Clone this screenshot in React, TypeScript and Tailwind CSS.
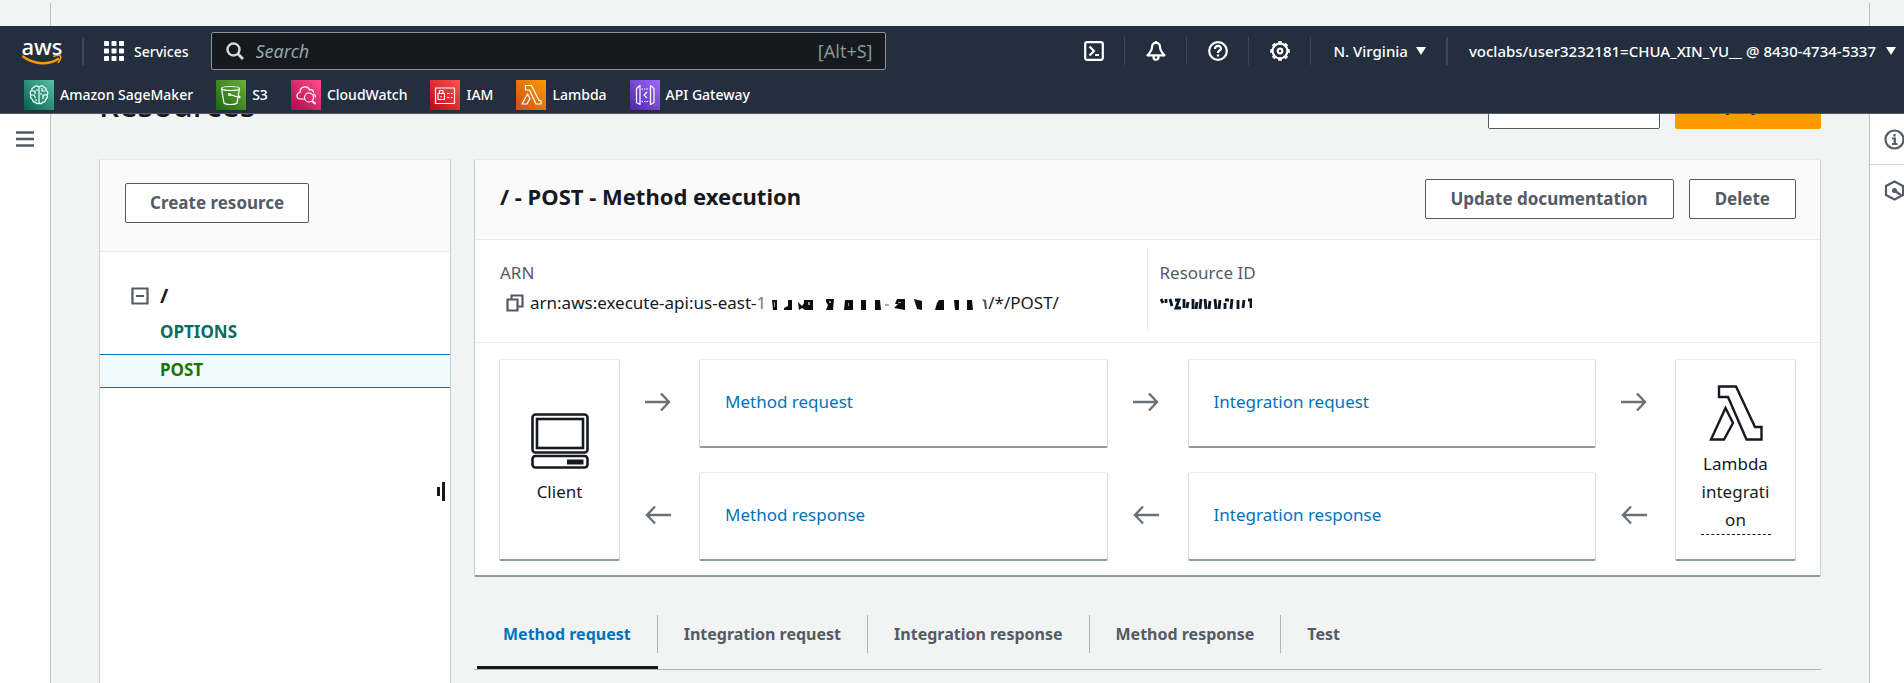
import React from "react";

const PANEL = "bg-white border border-[#c5cfd0] border-t-[#e6eaea]";
const CARD = "bg-white border border-[#d5dbdb] border-t-[#eaeded] border-b-2 border-b-[#8d9a9f] rounded-[2px]";
const BUTTON = "h-10 rounded-[2px] border border-[#545b64] bg-white text-[17px] leading-5 font-bold text-[#545b64]";

function Caret() {
  return (
    <svg className="h-2 w-[10px]" viewBox="0 0 10 8" aria-hidden="true">
      <path d="M0 0h10L5 8z" fill="currentColor" />
    </svg>
  );
}

function AwsLogo() {
  return (
    <div className="flex w-10 flex-col items-center text-white">
      <span className="text-[22px] leading-4 font-medium">aws</span>
      <svg className="mt-[1px] h-[10px] w-10" viewBox="0 0 40 10" aria-hidden="true">
        <path d="M1 1.500C12 10 27 10 36 4" fill="none" stroke="#ff9900" strokeWidth="2.400" strokeLinecap="round" />
        <path d="M32 1.200c3-1 6-.9 6.600 0s-.5 4-2.200 6" fill="none" stroke="#ff9900" strokeWidth="1.600" strokeLinecap="round" />
      </svg>
    </div>
  );
}

function GridIcon() {
  return (
    <svg className="size-5" viewBox="0 0 20 20" fill="currentColor" aria-hidden="true">
      {[0, 7.5, 15].map((y) => [0, 7.5, 15].map((x) => <rect key={`${x}-${y}`} x={x} y={y} width="5" height="5" rx=".8" />))}
    </svg>
  );
}

type Service = { name: string; from: string; to: string; icon: React.ReactNode };

const services: Service[] = [
  {
    name: "Amazon SageMaker", from: "#055f4e", to: "#56c0a7",
    icon: (
      <>
        <path d="M14 6.500c-2-1.500-4 0-4 1-2 0-2.500 2-2 3-2 1-2.500 3-1 4.500-1 2 0 4 1.500 4.500 0 2 1.500 3 3 2.500.5 2 2.500 2 3.500 1V6.500zM16 6.500c2-1.500 4 0 4 1 2 0 2.500 2 2 3 2 1 2.500 3 1 4.500 1 2 0 4-1.500 4.500 0 2-1.500 3-3 2.500-.5 2-2.500 2-3.500 1V6.500z" />
        <path d="M8 11h3v3M7 15h3l1.500 3M14 10h-2M18 8v3h3M23 15h-4v4M16 14h2M12 21v-2" />
      </>
    ),
  },
  {
    name: "S3", from: "#1b660f", to: "#6cae3e",
    icon: (
      <>
        <ellipse cx="14.500" cy="8.500" rx="9" ry="2" />
        <path d="M5.500 8.500L8 23c2 2 11 2 13 0l2.500-14.500M14 14.500l9 3c2 .5 1-1-1-2.500" />
        <circle cx="13.500" cy="14.500" r="1" />
      </>
    ),
  },
  {
    name: "CloudWatch", from: "#b0084d", to: "#ff4f8b",
    icon: (
      <>
        <path d="M13 19H9c-4 0-4-6 0-6.500C9 6 17 5 18.500 10c3-1 4 1 4 2.500M22 14c2 0 3 2 2 3.500" />
        <circle cx="18" cy="17.500" r="4.500" />
        <path d="M21 21l3.500 3" strokeWidth="2" />
      </>
    ),
  },
  {
    name: "IAM", from: "#bd0816", to: "#ff5252",
    icon: <path d="M5.500 8h19v15.500h-19zM8 13.500h6.500v6H8zM9.500 13.500v-3h3.500v3M17 13.500h2.500M21 13.500h1.500M17 17.500h2.500M21 17.500h1.500M11 16v1.500" />,
  },
  {
    name: "Lambda", from: "#c8511b", to: "#ff9900",
    icon: <path d="M9.500 5.500h6L23 20.500h2V24h-5l-6.500-14h-4zM11.500 14l2.500 4.500L11 24H6z" />,
  },
  {
    name: "API Gateway", from: "#4d27a8", to: "#a166ff",
    icon: (
      <>
        <path d="M10 5.500v19L6.500 22.500v-14zM20.500 5.500v19l3.500-2v-14zM17 12l-3 3 3 3" />
        <path d="M11.500 9h8M11.500 21.500h8" strokeDasharray="1.500 1" />
      </>
    ),
  },
];

function ServiceIcon({ service, index }: { service: Service; index: number }) {
  return (
    <svg className="size-[30px]" viewBox="0 0 30 30" aria-hidden="true">
      <defs>
        <linearGradient id={`svc-${index}`} x1="0" y1="1" x2="1" y2="0">
          <stop offset="0" stopColor={service.from} />
          <stop offset="1" stopColor={service.to} />
        </linearGradient>
      </defs>
      <rect width="30" height="30" fill={`url(#svc-${index})`} />
      <g fill="none" stroke="#fff" strokeWidth="1.200" strokeLinejoin="round">{service.icon}</g>
    </svg>
  );
}

function UtilityIcon({ label, children }: { label: string; children: React.ReactNode }) {
  return (
    <div className="flex h-7 w-[62px] items-center justify-center border-r border-[#414750]">
      <button type="button" aria-label={label} className="text-white">
        <svg className="size-5" viewBox="0 0 20 20" fill="none" stroke="currentColor" strokeWidth="2.200" strokeLinejoin="round" aria-hidden="true">
          {children}
        </svg>
      </button>
    </div>
  );
}

function Header() {
  return (
    <header className="flex h-[88px] shrink-0 flex-col border-b border-[#545b64] bg-[#232f3e] text-white">
      <div className="flex h-[50px] items-center">
        <a href="#home" aria-label="AWS home" className="ml-[22px]"><AwsLogo /></a>
        <span className="ml-5 h-7 w-[2px] bg-[#414750]" />
        <button type="button" className="ml-5 flex items-center gap-[10px] text-[14px] font-medium">
          <GridIcon />
          Services
        </button>
        <label className="ml-[22px] flex h-[38px] w-[675px] items-center rounded-[2px] border border-[#879596] bg-[#16191f] pr-3 pl-[14px]">
          <svg className="size-[18px] text-[#d5dbdb]" viewBox="0 0 18 18" fill="none" stroke="currentColor" aria-hidden="true">
            <circle cx="7.500" cy="7.500" r="6" strokeWidth="2.400" />
            <path d="M12 12l5 5" strokeWidth="2.800" />
          </svg>
          <input type="search" aria-label="Search" placeholder="Search" className="ml-3 min-w-0 flex-1 bg-transparent text-[18px] outline-none placeholder:text-[#95a5a6] placeholder:italic" />
          <span className="text-[18px] text-[#879596]">[Alt+S]</span>
        </label>
        <div className="ml-auto flex items-center">
          <UtilityIcon label="CloudShell">
            <rect x="1.200" y="1.200" width="17.600" height="17.600" rx="2" />
            <path d="M5.500 5.500L10 10l-4.500 4.500M11 14h4" />
          </UtilityIcon>
          <UtilityIcon label="Notifications">
            <path d="M10 1.800c-3 0-4 2-4 4.500 0 3-1 4.500-4.500 8h17C15 10.800 14 9.300 14 6.300c0-2.500-1-4.500-4-4.500z" />
            <path d="M7.600 15v1.500c0 3 4.800 3 4.800 0V15M10 0v2" />
          </UtilityIcon>
          <UtilityIcon label="Help">
            <circle cx="10" cy="10" r="8.800" />
            <path d="M7 8c0-4 6-4 6-.5 0 2-3 2-3 4.500M10 13.500v2" />
          </UtilityIcon>
          <UtilityIcon label="Settings">
            <circle cx="10" cy="10" r="7.400" />
            <circle cx="10" cy="10" r="2.300" />
            {[0, 45, 90, 135, 180, 225, 270, 315].map((a) => (
              <path key={a} d="M8.200 1.400h3.600" transform={`rotate(${a} 10 10)`} strokeWidth="2.400" />
            ))}
          </UtilityIcon>
          <button type="button" className="flex items-center gap-2 pl-[22px] text-[15px] font-medium">N. Virginia <Caret /></button>
          <span className="ml-5 h-7 w-[2px] bg-[#414750]" />
          <button type="button" className="flex items-center gap-[10px] pr-2 pl-[21px] text-[15px] font-medium whitespace-nowrap">
            voclabs/user3232181=CHUA_XIN_YU__ @ 8430-4734-5337 <Caret />
          </button>
        </div>
      </div>
      <nav aria-label="Favorites" className="flex items-center gap-[23px] pt-1 pl-6">
        {services.map((s, i) => (
          <a key={s.name} href="#service" className="flex items-center gap-[6px] text-[14px] leading-[30px] font-medium">
            <ServiceIcon service={s} index={i} />
            {s.name}
          </a>
        ))}
      </nav>
    </header>
  );
}

function ArrowPair() {
  return (
    <div className="grid grid-rows-2 gap-6 text-[#687078]">
      {["M0 10h24M16 1.500l8 8.500-8 8.500", "M26 10H2M10 1.500L2 10l8 8.500"].map((d) => (
        <div key={d} className="flex items-center justify-center pr-1 pb-[3px]">
          <svg className="h-5 w-[26px]" viewBox="0 0 26 20" fill="none" stroke="currentColor" strokeWidth="2.400" aria-hidden="true">
            <path d={d} />
          </svg>
        </div>
      ))}
    </div>
  );
}

function StepPair({ steps }: { steps: string[] }) {
  return (
    <div className="grid grid-rows-2 gap-6">
      {steps.map((step) => (
        <div key={step} className={`${CARD} px-[25px] pt-7`}>
          <a href="#step" className="text-[17px] leading-7 text-[#0073bb]">{step}</a>
        </div>
      ))}
    </div>
  );
}

function ArnRedaction() {
  return (
    <svg className="h-5 w-[222px]" viewBox="0 0 222 20" aria-hidden="true">
      <defs><filter id="smudge" x="-5%" y="-20%" width="110%" height="140%"><feGaussianBlur stdDeviation=".7" /></filter></defs>
      <g filter="url(#smudge)" fill="#0b1113">
        <path d="M6 7h5v10H7zM22 7h4v10h-8v-2l4-2zM32 9l4 4 2-3v-3h9v10h-8l-3-2-3 2zM60 6h8l-1 11h-7l2-5-2-3zM79 7h8v10h-9zM95 7h5v10h-5zM109 7h5l1 10h-6zM129 11l2-5h8v11l-11-2 4-4zM148 6l8 2v9l-5-1zM173 7h5v10h-9l2-7zM188 7h5v10h-4zM201 7h5l1 10h-6z" />
        <path d="M119 11h4v2h-4z" opacity=".35" />
        <path d="M216 6l4 1 1 9h-2l-1-7z" opacity=".7" />
      </g>
      <g fill="#fff" opacity=".6"><path d="M8 9h1v5H8zM42 9h2v3h-2zM63 8h2v2h-2zM82 10h1v3h-1zM132 9h3v1h-3z" /></g>
    </svg>
  );
}

function IdRedaction() {
  return (
    <svg className="h-4 w-[92px]" viewBox="0 0 92 16" aria-hidden="true">
      <g filter="url(#smudge)" fill="none" stroke="#0b1420" strokeWidth="2.800">
        <path d="M1 4l2 4M6 4v4M10 4l2 7M15 5h4l-3 8h5M24 4v9M28 7l-1 6M33 4v10M37 7l-1 7M41 4l-1 10M45 4l1 10M50 6l-1 8M55 4l1 10M60 5l-1 9M65 5h4M65 8v6M72 4l-1 10M78 5v9M84 5l-1 8M88 5h3v8" />
      </g>
    </svg>
  );
}

function ExecutionPanel() {
  return (
    <section className={`${PANEL} rounded-[2px] border-b-2 border-b-[#8d9a9f]`}>
      <div className="flex h-20 items-center border-b border-[#eaeded] bg-[#fafafa] pr-6 pb-[2px] pl-[25px]">
        <h2 className="pb-[6px] text-[22px] leading-7 font-bold text-[#16191f]">/ - POST - Method execution</h2>
        <div className="ml-auto flex gap-[15px]">
          <button type="button" className={`${BUTTON} px-[25px]`}>Update documentation</button>
          <button type="button" className={`${BUTTON} px-[25px]`}>Delete</button>
        </div>
      </div>
      <dl className="grid grid-cols-2 border-b border-[#eaeded] pt-2 pb-3 text-[17px] leading-[30px]">
        <div className="h-[82px] border-r border-[#eaeded] pt-[10px] pl-[25px]">
          <dt className="text-[#545b64]">ARN</dt>
          <dd className="flex items-center pl-[6px] whitespace-nowrap text-[#16191f]">
            <svg className="mr-[6px] size-[18px] text-[#545b64]" viewBox="0 0 18 18" fill="none" stroke="currentColor" strokeWidth="2.200" aria-hidden="true">
              <path d="M1.500 5.500h10v11h-10zM5.500 5V1.500h11v11h-4" />
            </svg>
            arn:aws:execute-api:us-east-<span className="text-[#777]">1</span>
            <ArnRedaction />
            /*/POST/
          </dd>
        </div>
        <div className="px-3 pt-[10px]">
          <dt className="text-[#545b64]">Resource ID</dt>
          <dd className="flex h-[30px] items-center"><IdRedaction /></dd>
        </div>
      </dl>
      <div className="grid grid-cols-[121px_79px_1fr_80px_1fr_79px_121px] px-6 pt-4 pb-[14px] text-[17px] leading-7 text-[#16191f]">
        <div className={`${CARD} flex h-[202px] flex-col items-center pt-[53px]`}>
          <svg className="h-14 w-[58px]" viewBox="0 0 58 56" fill="none" stroke="#16191f" aria-hidden="true">
            <rect x="1.500" y="1.500" width="55" height="38" rx="3" strokeWidth="2.600" />
            <rect x="6" y="6" width="46" height="29" strokeWidth="2.600" />
            <rect x="1.500" y="43" width="55" height="11.500" rx="3" strokeWidth="2.600" />
            <path d="M36 49h16.500" strokeWidth="5" />
          </svg>
          <span className="mt-[9px]">Client</span>
        </div>
        <ArrowPair />
        <StepPair steps={["Method request", "Method response"]} />
        <ArrowPair />
        <StepPair steps={["Integration request", "Integration response"]} />
        <ArrowPair />
        <div className={`${CARD} flex flex-col items-center px-6 pt-[25px]`}>
          <svg className="h-14 w-[54px]" viewBox="0 0 54 56" fill="none" stroke="#16191f" strokeWidth="2.400" aria-hidden="true">
            <path d="M10 1.500h17L46 42h6.500v12.500H37.500L19 12h-9zM16.500 23L24 38 15 54.500H2z" />
          </svg>
          <span className="mt-[9px] w-[70px] border-b border-dashed border-[#16191f] text-center wrap-break-word">Lambda integration</span>
        </div>
      </div>
    </section>
  );
}

const tabs = ["Method request", "Integration request", "Integration response", "Method response", "Test"];

function Tabs() {
  return (
    <div role="tablist" className="mt-[38px] flex border-b border-[#aab7b8] pl-[3px] text-[16px] font-bold text-[#545b64]">
      {tabs.map((tab, i) => (
        <button
          key={tab}
          type="button"
          role="tab"
          aria-selected={i === 0}
          className={i === 0 ? "border-b-[3px] border-[#16191f] pb-[13px] text-[#0073bb]" : "border-b-[3px] border-transparent pb-[13px]"}
        >
          <span className={i === tabs.length - 1 ? "block px-[26px] py-1 leading-[30px]" : "block border-r border-[#aab7b8] px-[26px] py-1 leading-[30px]"}>{tab}</span>
        </button>
      ))}
    </div>
  );
}

function ResourceTree() {
  return (
    <aside className={`${PANEL} relative border-b-0`}>
      <div className="h-[92px] border-b border-[#eaeded] bg-[#fafafa] px-[25px] pt-[23px]">
        <button type="button" className={`${BUTTON} px-6`}>Create resource</button>
      </div>
      <ul className="pt-[27px] text-[17px] font-bold">
        <li>
          <div className="flex h-[34px] items-center gap-[11px] pl-[31px] text-[20px] text-[#16191f]">
            <button type="button" aria-label="Collapse">
              <svg className="size-[18px] text-[#545b64]" viewBox="0 0 18 18" fill="none" stroke="currentColor" strokeWidth="2.200" aria-hidden="true">
                <path d="M1.500 1.500h15v15h-15zM5 9h8" />
              </svg>
            </button>
            /
          </div>
          <ul>
            <li className="flex h-[41px] items-center pb-[3px] pl-[60px]"><a href="#options" className="text-[#0f6b5c]">OPTIONS</a></li>
            <li className="flex h-[34px] items-center border-y border-[#0073bb] bg-[#f1faff] pb-[3px] pl-[60px]"><a href="#post" className="text-[#1d7300]">POST</a></li>
          </ul>
        </li>
      </ul>
      <button type="button" aria-label="Resize panel" className="absolute top-[322px] right-[5px] flex items-center gap-[2px]">
        <span className="h-[9px] w-[3px] bg-[#16191f]" />
        <span className="h-[19px] w-[3px] bg-[#16191f]" />
      </button>
    </aside>
  );
}

function MainContent() {
  return (
    <main className="-mt-[25px] flex min-w-0 flex-1 flex-col px-12">
      <div className="flex shrink-0 items-start">
        <h1 className="text-[32px] leading-8 font-medium text-[#16191f]">Resources</h1>
        <div className="ml-auto flex gap-[15px]">
          <button type="button" className={`${BUTTON} flex w-[172px] items-center justify-center gap-2 pb-2`}>API actions <Caret /></button>
          <button type="button" className="h-10 w-[146px] rounded-[2px] bg-[#ff9900] pb-2 text-[17px] leading-5 font-bold text-[#16191f]">Deploy API</button>
        </div>
      </div>
      <div className="grid flex-1 grid-cols-[352px_minmax(0,1fr)] gap-[23px] pt-[30px]">
        <ResourceTree />
        <div>
          <ExecutionPanel />
          <Tabs />
        </div>
      </div>
    </main>
  );
}

export default function App() {
  return (
    <div className="flex h-screen flex-col overflow-hidden bg-[#f2f3f3] font-['Noto_Sans',sans-serif]">
      <div className="flex h-[26px] shrink-0 justify-between pt-[3px]">
        <span className="w-[51px] border-r border-[#bcc5c6]" />
        <span className="w-[35px] border-l border-[#bcc5c6]" />
      </div>
      <Header />
      <div className="flex min-h-0 flex-1 overflow-hidden">
        <div className="w-[51px] shrink-0 border-r border-[#bcc5c6] bg-white pt-[15px] pl-4">
          <button type="button" aria-label="Open navigation" className="text-[#545b64]">
            <svg className="h-4 w-[18px]" viewBox="0 0 18 16" stroke="currentColor" strokeWidth="2.400" aria-hidden="true">
              <path d="M0 1.500h18M0 8h18M0 14.500h18" />
            </svg>
          </button>
        </div>
        <MainContent />
        <div className="w-[35px] shrink-0 overflow-hidden border-l border-[#bcc5c6] bg-white text-[#545b64]">
          <div className="flex h-[51px] items-center border-b border-[#d5dbdb] pl-[14px]">
            <button type="button" aria-label="Info" className="shrink-0">
              <svg className="size-[21px]" viewBox="0 0 21 21" fill="none" stroke="currentColor" strokeWidth="2.200" aria-hidden="true">
                <circle cx="10.500" cy="10.500" r="9" />
                <path d="M10.500 5v2.500M8 9.500h2.800V15M8 15h5.500" />
              </svg>
            </button>
          </div>
          <div className="flex h-[51px] items-center pl-[14px]">
            <button type="button" aria-label="Tutorials" className="shrink-0">
              <svg className="size-[21px]" viewBox="0 0 21 21" fill="none" stroke="currentColor" strokeWidth="2.200" aria-hidden="true">
                <path d="M10.500 1.500l8.500 4.500v9l-8.500 4.500L2 15V6z" />
                <circle cx="10.500" cy="10.500" r="2.500" fill="currentColor" stroke="none" />
                <path d="M11 11l6 4" />
              </svg>
            </button>
          </div>
        </div>
      </div>
    </div>
  );
}
